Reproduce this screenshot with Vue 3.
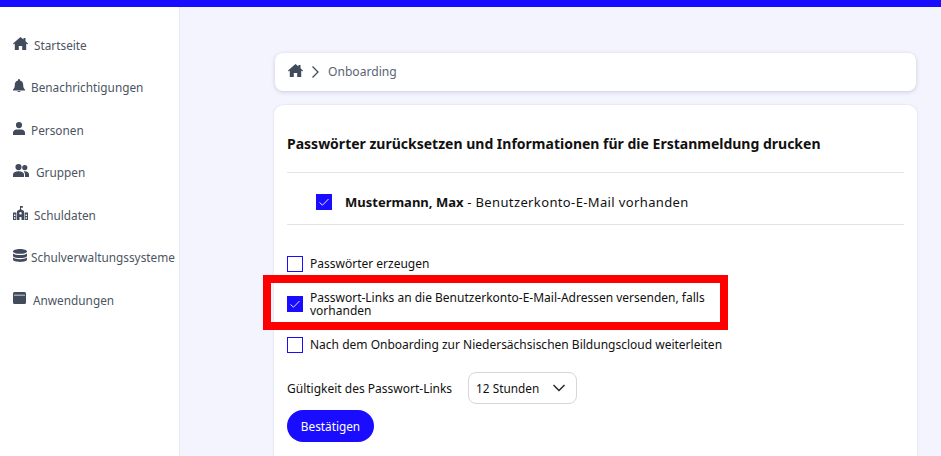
<script setup>
const nav = [
  { label: 'Startseite', icon: 'home', w: 15, h: 13, d: 'M7.500 0 0 6.500l.8.9 1-.8V13h4V9h3.400v4h4V6.600l1 .8.8-.9L12.500 4.200V1h-2v1.500z' },
  { label: 'Benachrichtigungen', icon: 'bell', w: 12, h: 13, d: 'M6 0a1 1 0 0 0-1 1v.6C3 2 1.800 3.700 1.800 5.700c0 2.600-.6 3.600-1.800 4.800v.9h12v-.9c-1.200-1.200-1.800-2.200-1.800-4.800 0-2-1.200-3.700-3.200-4.100V1a1 1 0 0 0-1-1zM4.400 11.900a1.600 1.100 0 0 0 3.200 0z' },
  { label: 'Personen', icon: 'person', w: 12, h: 13, d: 'M6 0a3.100 3.100 0 1 1 0 6.200A3.100 3.100 0 0 1 6 0zM0 13v-2.200C0 8.900 1.600 7.400 3.500 7.400h5c1.900 0 3.500 1.500 3.500 3.400V13z' },
  { label: 'Gruppen', icon: 'group', w: 16, h: 13, d: 'M5.500 0a3.100 3.100 0 1 1 0 6.200 3.100 3.100 0 0 1 0-6.200zM11.800 1a2.600 2.600 0 1 1 0 5.200 2.600 2.600 0 0 1 0-5.200zM0 13v-2.400C0 8.600 2 7.200 5.500 7.200S11 8.600 11 10.600V13zM12 13v-2.600c0-1.200-.5-2.200-1.300-3 2.700-.3 5.300.8 5.300 3V13z' },
  { label: 'Schuldaten', icon: 'school', w: 15, h: 14, d: 'M7 0h2.800v1.800H8V3.200l3 1.800V14H4V5l3-1.800zM7.500 6a1.300 1.300 0 1 0 .01 0zM6.500 11v3h2v-3zM0 6.500h3.400V14H0zM11.600 6.500H15V14h-3.400zM1 8.500v1.500h1.400V8.500zM1 11.300v1.500h1.400v-1.500zM12.600 8.500v1.500H14V8.500zM12.600 11.300v1.500H14v-1.500z' },
  { label: 'Schulverwaltungssysteme', icon: 'db', w: 14, h: 13, d: 'M7 0c3.800 0 7 1 7 2.400S10.800 4.800 7 4.800 0 3.800 0 2.400 3.200 0 7 0zM0 4.400C1.400 5.500 4 6 7 6s5.600-.5 7-1.600v2.500C14 8.100 10.800 9 7 9S0 8.100 0 6.900zM0 8.600C1.400 9.700 4 10.200 7 10.200s5.600-.5 7-1.600v2C14 12 10.800 13 7 13s-7-1-7-2.400z' },
  { label: 'Anwendungen', icon: 'app', w: 13, h: 12, d: 'M1.500 0h10A1.500 1.500 0 0 1 13 1.500v9a1.500 1.500 0 0 1-1.500 1.500h-10A1.500 1.500 0 0 1 0 10.500v-9A1.500 1.500 0 0 1 1.500 0zM1 2.800v.6h11v-.6z' },
]
const homePath = nav[0].d
</script>

<template>
  <div class="page">
    <div class="topbar"></div>
    <div class="body">
      <aside class="sidebar">
        <div v-for="n in nav" :key="n.label" class="nav-item" :class="'nav-' + n.icon">
          <svg class="nav-icon" :viewBox="`0 0 ${n.w} ${n.h}`" :width="n.w" :height="n.h">
            <path fill-rule="evenodd" :d="n.d" />
          </svg>
          <span>{{ n.label }}</span>
        </div>
      </aside>
      <main class="main">
        <nav class="crumb">
          <svg class="crumb-home" viewBox="0 0 15 13" width="15" height="13"><path :d="homePath" /></svg>
          <svg class="crumb-sep" viewBox="0 0 10 14" width="10" height="14"><path d="M2.500 1.500 8 7l-5.500 5.500" /></svg>
          <span class="crumb-text">Onboarding</span>
        </nav>
        <section class="card">
          <h1>Passwörter zurücksetzen und Informationen für die Erstanmeldung drucken</h1>
          <div class="user-row">
            <span class="box checked">
              <svg viewBox="0 0 16 16" width="16" height="16"><path d="M3.500 8.500 6.500 11.200 12.500 5" /></svg>
            </span>
            <span class="user-text"><b>Mustermann, Max</b> - Benutzerkonto-E-Mail vorhanden</span>
          </div>
          <div class="options">
            <label class="opt opt-first">
              <span class="box"></span>
              <span>Passwörter erzeugen</span>
            </label>
            <label class="opt opt-marked">
              <span class="box checked">
                <svg viewBox="0 0 16 16" width="16" height="16"><path d="M3.500 8.500 6.500 11.200 12.500 5" /></svg>
              </span>
              <span class="opt-text">Passwort-Links an die Benutzerkonto-E-Mail-Adressen versenden, falls vorhanden</span>
              <i class="marker"></i>
            </label>
            <label class="opt">
              <span class="box"></span>
              <span>Nach dem Onboarding zur Niedersächsischen Bildungscloud weiterleiten</span>
            </label>
          </div>
          <div class="validity">
            <span>Gültigkeit des Passwort-Links</span>
            <div class="select">
              <span>12 Stunden</span>
              <svg viewBox="0 0 14 8" width="14" height="8"><path d="M1.500 1 7 6.500 12.500 1" /></svg>
            </div>
          </div>
          <button class="confirm" type="button">Bestätigen</button>
        </section>
      </main>
    </div>
  </div>
</template>

<style>
html, body { margin: 0; background: #f3f4fd; overflow: hidden; }
</style>

<style scoped>
.page {
  height: 456px;
  overflow: hidden;
  font-family: "Noto Sans", "Open Sans", sans-serif;
  font-size: 12px;
  color: #111;
  display: flex;
  flex-direction: column;
}
.topbar { height: 7px; background: #1a0dff; flex: none; }
.body { display: flex; flex: 1; min-height: 0; }
.sidebar {
  width: 179px;
  flex: none;
  background: #fff;
  border-right: 1px solid #e8e8f3;
  padding-top: 16.6px;
}
.nav-item {
  height: 42.5px;
  display: flex;
  align-items: center;
  padding-left: 13px;
  color: #4b5563;
  font-size: 11.8px;
  white-space: nowrap;
}
.nav-icon { fill: #414b5c; flex: none; margin-bottom: 3px; }
.nav-item span { margin-left: 6px; }
.nav-group span, .nav-app span { margin-left: 7px; }
.nav-db span { margin-left: 4px; }
.main { flex: 1; padding: 46px 24px 0 94px; min-width: 0; }
.crumb {
  height: 38px;
  margin: 0 1px;
  background: #fff;
  border-radius: 8px;
  box-shadow: 0 1px 4px rgba(60, 60, 110, .22);
  display: flex;
  align-items: center;
  padding-left: 13px;
  color: #5b6472;
  font-size: 12.1px;
}
.crumb-home { fill: #414b5c; margin-bottom: 3px; }
.crumb-sep { fill: none; stroke: #414b5c; stroke-width: 1.300; margin: 0 8px 1px 7px; }
.crumb-text { margin-bottom: 2px; }
.card {
  margin-top: 14px;
  background: #fff;
  border-radius: 9px;
  box-shadow: 0 0 2px rgba(60, 60, 110, .18);
  padding: 0 13px;
  height: 400px;
}
h1 {
  margin: 0;
  padding: 29px 0 18px;
  font-size: 14px;
  line-height: 20px;
  font-weight: 700;
  border-bottom: 1px solid #e2e3e8;
  white-space: nowrap;
}
.user-row {
  height: 45px;
  padding-top: 6px;
  display: flex;
  align-items: center;
  padding-left: 29px;
  border-bottom: 1px solid #e2e3e8;
  font-size: 13px;
}
.user-text { margin-left: 13px; letter-spacing: .37px; }
.user-text b { letter-spacing: 0; }
.box {
  width: 16px;
  height: 16px;
  box-sizing: border-box;
  border: 1px solid #1a0dff;
  background: #fff;
  flex: none;
  display: block;
}
.box.checked { background: #1a0dff; }
.box svg { display: block; margin: -1px; fill: none; stroke: #dfe0ff; stroke-width: 1; }
.options { padding-top: 22px; }
.opt { display: flex; align-items: center; gap: 7px; min-height: 36px; line-height: 12px; position: relative; }
.opt-first { min-height: 34px; }
.opt-text { width: 420px; line-height: 13px; }
.opt-marked { min-height: 46px; }
.marker {
  position: absolute;
  left: -24px;
  top: -6px;
  width: 465px;
  height: 55px;
  box-sizing: border-box;
  border: 8px solid #f00;
  pointer-events: none;
}
.validity { display: flex; align-items: center; gap: 16px; margin-top: 9px; }
.select {
  width: 109px;
  height: 32px;
  box-sizing: border-box;
  border: 1px solid #d4d5de;
  border-radius: 8px;
  display: flex;
  align-items: center;
  justify-content: space-between;
  padding: 0 10px 0 7px;
  font-size: 11.8px;
}
.select svg { fill: none; stroke: #222; stroke-width: 1.400; }
.confirm {
  display: block;
  margin-top: 6px;
  width: 87px;
  height: 32px;
  border: 0;
  border-radius: 16px;
  background: #1a0dff;
  color: #fff;
  font: inherit;
  font-size: 11.8px;
  padding: 0;
}
</style>
